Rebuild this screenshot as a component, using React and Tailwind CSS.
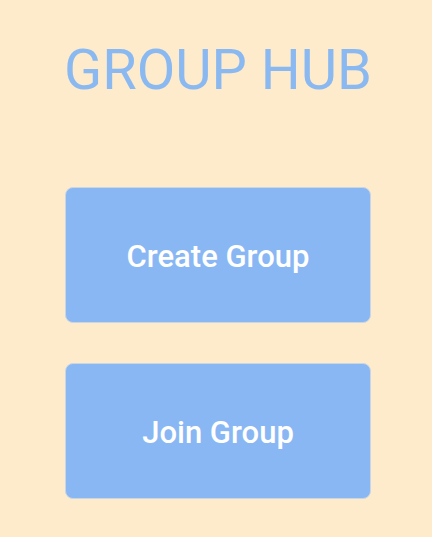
export default function App() {
  return (
    <div
      className="min-h-[537px] w-full bg-[#feebcb] flex flex-col items-center pl-[4px]"
      style={{ fontFamily: "Roboto, 'Noto Sans', sans-serif" }}
    >
      <h1 className="mt-[38px] text-[56px] leading-[64px] font-normal text-[#8ab9f2] tracking-normal">
        GROUP HUB
      </h1>
      <div className="mt-[85px] flex flex-col gap-[40px] w-[306px]">
        <button className="h-[136px] w-full pt-[4px] rounded-[8px] bg-[#89b7f3] border border-[#c9d6e6] text-white text-[31px] font-medium">
          Create Group
        </button>
        <button className="h-[136px] w-full pt-[4px] rounded-[8px] bg-[#89b7f3] border border-[#c9d6e6] text-white text-[31px] font-medium">
          Join Group
        </button>
      </div>
    </div>
  );
}
